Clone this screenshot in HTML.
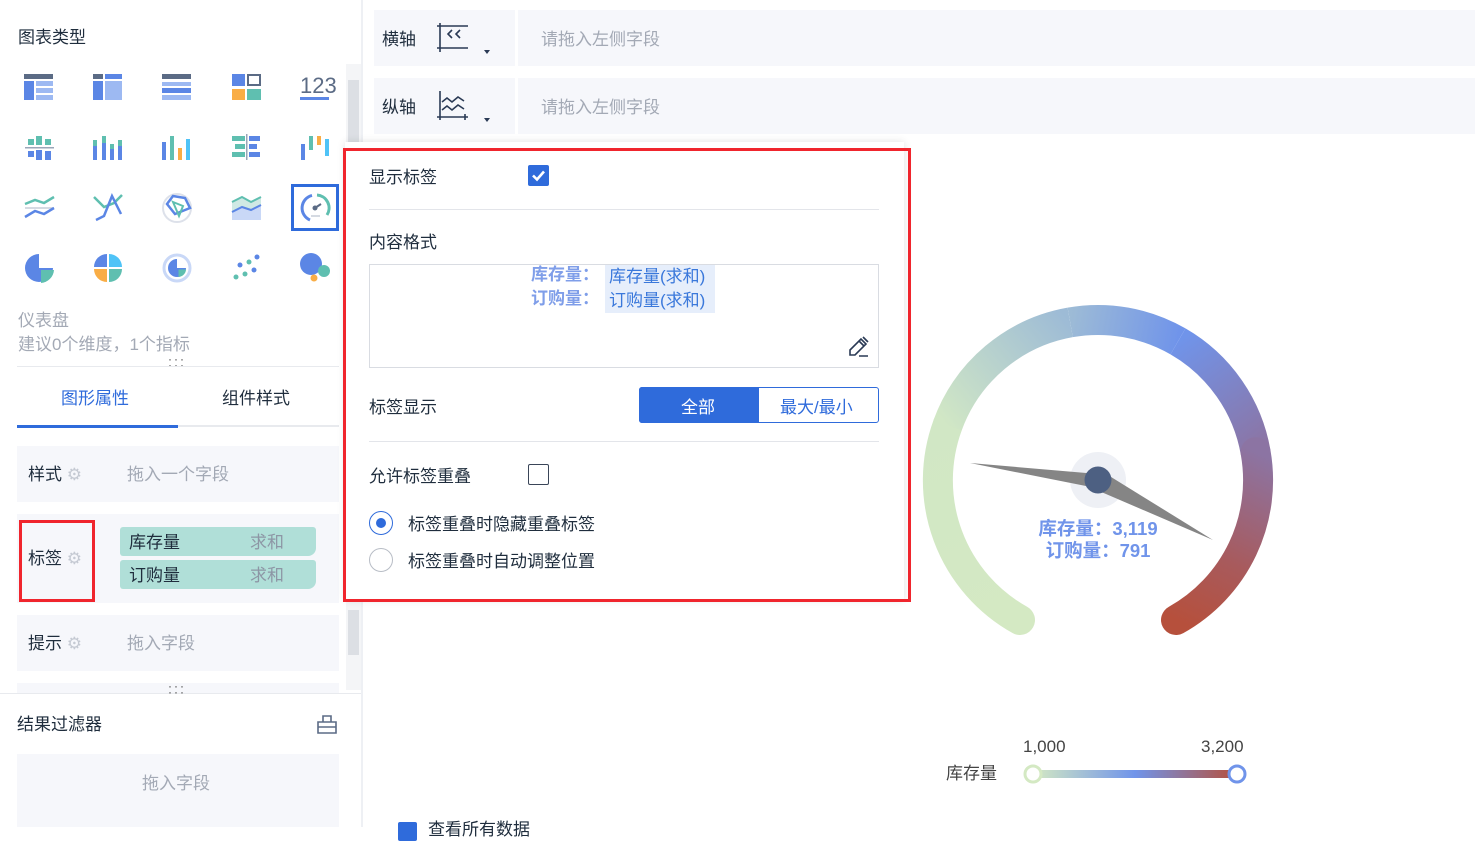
<!DOCTYPE html>
<html><head><meta charset="utf-8"><style>
*{box-sizing:border-box;margin:0;padding:0}
body{width:1475px;height:827px;overflow:hidden;background:#fff;font-family:"Liberation Sans","Noto Sans CJK SC",sans-serif;color:#1f2d3d;position:relative;font-size:17px}
.a{position:absolute}
.t{position:absolute;white-space:nowrap;transform:translateY(-2px)}
.gray{color:#a3a9b5}
.box{position:absolute;background:#f6f7fb}
.gear{color:#c5cad3;font-size:17px}
</style></head><body>

<!-- left panel -->
<div class="t" style="left:18px;top:25px;font-size:17px">图表类型</div>
<svg class="a" style="left:0;top:60px" width="345" height="240">
 <g transform="translate(24,14)"><rect width="29" height="5" fill="#5b6b85"/><rect y="7" width="10" height="19" fill="#5b86e5"/><rect x="12" y="7" width="17" height="5" fill="#9db9f2"/><rect x="12" y="14" width="17" height="5" fill="#9db9f2"/><rect x="12" y="21" width="17" height="5" fill="#9db9f2"/></g>
 <g transform="translate(93,14)"><rect width="10" height="5" fill="#5b6b85"/><rect x="12" width="17" height="5" fill="#5b86e5"/><rect y="7" width="10" height="19" fill="#5b86e5"/><rect x="12" y="7" width="17" height="19" fill="#9db9f2"/></g>
 <g transform="translate(162,14)"><rect width="29" height="5" fill="#5b6b85"/><rect y="8" width="29" height="4" fill="#9db9f2"/><rect y="14" width="29" height="5" fill="#5b86e5"/><rect y="21" width="29" height="5" fill="#9db9f2"/></g>
 <g transform="translate(232,14)"><rect width="13" height="12" fill="#5b86e5"/><rect x="16" y="1" width="12" height="10" fill="none" stroke="#5b6b85" stroke-width="2"/><rect y="15" width="13" height="11" fill="#f9ad45"/><rect x="15" y="15" width="14" height="11" fill="#5fbfb0"/></g>
 <text x="300" y="33" font-size="22" fill="#5b6b85" font-family="Liberation Sans">123</text><rect x="300" y="37" width="29" height="3" fill="#5b86e5"/>
 <g transform="translate(25,74)"><rect x="3" y="5" width="6" height="6" fill="#5fbfb0"/><rect x="11" y="2" width="6" height="9" fill="#5fbfb0"/><rect x="20" y="5" width="6" height="6" fill="#5fbfb0"/><rect y="13" width="29" height="1.5" fill="#9aa6b8"/><rect x="3" y="17" width="6" height="6" fill="#5b86e5"/><rect x="11" y="16" width="6" height="10" fill="#5b86e5"/><rect x="20" y="17" width="6" height="9" fill="#5b86e5"/></g>
 <g transform="translate(93,74)"><rect y="6" width="4" height="20" fill="#5b86e5"/><rect y="6" width="4" height="6" fill="#5fbfb0"/><rect x="9" y="2" width="4" height="24" fill="#5b86e5"/><rect x="9" y="2" width="4" height="7" fill="#5fbfb0"/><rect x="17" y="10" width="4" height="16" fill="#5b86e5"/><rect x="17" y="10" width="4" height="5" fill="#5fbfb0"/><rect x="25" y="6" width="4" height="20" fill="#5b86e5"/><rect x="25" y="6" width="4" height="6" fill="#5fbfb0"/></g>
 <g transform="translate(162,74)"><rect y="8" width="4" height="18" fill="#5b86e5"/><rect x="8" y="2" width="4" height="24" fill="#5fbfb0"/><rect x="16" y="14" width="4" height="12" fill="#f9ad45"/><rect x="24" y="5" width="4" height="21" fill="#4fc3f7"/></g>
 <g transform="translate(232,74)"><rect y="2" width="13" height="5" fill="#5fbfb0"/><rect x="14" y="0" width="1.5" height="26" fill="#9aa6b8"/><rect x="17" y="2" width="11" height="5" fill="#5b86e5"/><rect x="3" y="10" width="10" height="5" fill="#5fbfb0"/><rect x="17" y="10" width="8" height="5" fill="#5b86e5"/><rect y="18" width="13" height="5" fill="#5fbfb0"/><rect x="17" y="18" width="11" height="5" fill="#5b86e5"/></g>
 <g transform="translate(301,74)"><rect y="10" width="4" height="16" fill="#5b86e5"/><rect x="8" y="2" width="4" height="14" fill="#5fbfb0"/><rect x="16" y="2" width="4" height="9" fill="#f9ad45"/><rect x="24" y="5" width="4" height="17" fill="#4fc3f7"/></g>
 <g transform="translate(25,134)" fill="none" stroke-width="2.5"><polyline points="0,10 10,6 19,9 29,3" stroke="#5fbfb0"/><line x1="0" y1="14" x2="29" y2="14" stroke="#c7cdd8" stroke-width="1.5"/><polyline points="0,23 10,17 19,20 29,14" stroke="#5b86e5"/></g>
 <g transform="translate(94,134)" fill="none" stroke-width="2.5"><polyline points="0,3 10,13 20,9 28,1" stroke="#5fbfb0"/><polyline points="2,26 10,22 18,2 27,20" stroke="#5b86e5"/></g>
 <g transform="translate(161,132)" fill="none"><circle cx="16" cy="16" r="14" stroke="#dde1ea" stroke-width="2"/><polygon points="6,12 12,4 24,6 29,16 14,22" stroke="#5b86e5" stroke-width="2.5"/><polygon points="12,10 22,14 18,24" stroke="#5fbfb0" stroke-width="2"/></g>
 <g transform="translate(232,134)"><polygon points="0,8 10,3 19,8 29,3 29,26 0,26" fill="#cfe9e4"/><polyline points="0,8 10,3 19,8 29,3" fill="none" stroke="#5fbfb0" stroke-width="2"/><polygon points="0,18 10,13 19,16 29,11 29,26 0,26" fill="#c9d8f7"/><polyline points="0,18 10,13 19,16 29,11" fill="none" stroke="#5b86e5" stroke-width="2"/></g>
 <rect x="292.5" y="125.5" width="45" height="44" fill="none" stroke="#2f6bdb" stroke-width="3"/>
 <g transform="translate(315,148)" fill="none" stroke-width="3"><path d="M -5 12 A 13 13 0 0 1 -3 -12.6" stroke="#5b86e5"/><path d="M 2 -13 A 13 13 0 0 1 12 7" stroke="#5fbfb0"/><circle r="2.5" fill="#5b6b85" stroke="none"/><line x1="0" y1="0" x2="6" y2="-4" stroke="#5b6b85" stroke-width="2"/><line x1="-4" y1="8" x2="5" y2="8" stroke="#c7cdd8" stroke-width="1.5"/></g>
 <g transform="translate(39,208)"><path d="M0 0 L0 -14 A14 14 0 1 0 14 0 Z" fill="#5b86e5"/><path d="M2 2 L15 2 A14 14 0 0 1 2 15 Z" fill="#5fbfb0"/></g>
 <g transform="translate(108,208)"><path d="M-1 -1 L-1 -14 A13 13 0 0 0 -14 -1 Z" fill="#5b86e5"/><path d="M1 -1 L1 -14 A13 13 0 0 1 14 -1 Z" fill="#4fc3f7"/><path d="M-1 1 L-14 1 A13 13 0 0 0 -1 14 Z" fill="#f9ad45"/><path d="M1 1 L14 1 A13 13 0 0 1 1 14 Z" fill="#5fbfb0"/></g>
 <g transform="translate(177,208)"><circle r="13" fill="none" stroke="#c9d8f7" stroke-width="3"/><path d="M0 0 L0 -9 A9 9 0 1 0 9 0 Z" fill="#5b86e5"/><path d="M1.5 1.5 L9 1.5 A8 8 0 0 1 1.5 9 Z" fill="#5fbfb0"/></g>
 <g transform="translate(232,195)"><circle cx="25" cy="2" r="2.5" fill="#5b86e5"/><circle cx="17" cy="7" r="2.5" fill="#5fbfb0"/><circle cx="8" cy="10" r="2.5" fill="#5b86e5"/><circle cx="22" cy="15" r="2.5" fill="#5b86e5"/><circle cx="13" cy="19" r="2.5" fill="#5fbfb0"/><circle cx="4" cy="22" r="2.5" fill="#5fbfb0"/></g>
 <g transform="translate(300,192)"><circle cx="11" cy="12" r="11" fill="#5b86e5"/><circle cx="24" cy="19" r="6" fill="#5fbfb0"/><circle cx="14" cy="26" r="3.5" fill="#f9ad45"/></g>
</svg>
<div class="a" style="left:346px;top:64px;width:15px;height:626px;background:#f4f5f7"></div>
<div class="a" style="left:348px;top:80px;width:11px;height:64px;background:#dcdfe4"></div>
<div class="a" style="left:348px;top:610px;width:11px;height:45px;background:#dcdfe4"></div>
<div class="a" style="left:361px;top:0;width:2px;height:827px;background:#eef0f4"></div>

<div class="t gray" style="left:18px;top:308px;font-size:17px">仪表盘</div>
<div class="t gray" style="left:18px;top:332px;font-size:17px">建议0个维度，1个指标</div>
<div class="t" style="left:168px;top:358px;font-size:12px;letter-spacing:2px;line-height:6px;color:#444">···<br>···</div>
<div class="a" style="left:17px;top:366px;width:322px;height:1px;background:#e8eaee"></div>
<div class="t" style="left:61px;top:386px;color:#2f6bdb">图形属性</div>
<div class="t" style="left:222px;top:386px">组件样式</div>
<div class="a" style="left:17px;top:425px;width:322px;height:2px;background:#e8eaee"></div>
<div class="a" style="left:17px;top:425px;width:161px;height:3px;background:#2f6bdb"></div>

<div class="box" style="left:17px;top:446px;width:322px;height:56px"></div>
<div class="t" style="left:28px;top:462px">样式 <span class="gear">⚙</span></div>
<div class="t gray" style="left:127px;top:462px">拖入一个字段</div>
<div class="box" style="left:17px;top:514px;width:322px;height:89px"></div>
<div class="t" style="left:28px;top:546px">标签 <span class="gear">⚙</span></div>
<div class="a" style="left:19px;top:520px;width:76px;height:82px;border:3px solid #f0252d"></div>
<div class="a" style="left:120px;top:527px;width:196px;height:29px;background:#b0dfd8;border-radius:3px 3px 8px 3px"></div>
<div class="t" style="left:129px;top:530px">库存量</div><div class="t" style="left:250px;top:530px;color:#8d96a5">求和</div>
<div class="a" style="left:120px;top:560px;width:196px;height:29px;background:#b0dfd8;border-radius:3px 3px 8px 3px"></div>
<div class="t" style="left:129px;top:563px">订购量</div><div class="t" style="left:250px;top:563px;color:#8d96a5">求和</div>
<div class="box" style="left:17px;top:615px;width:322px;height:56px"></div>
<div class="t" style="left:28px;top:631px">提示 <span class="gear">⚙</span></div>
<div class="t gray" style="left:127px;top:631px">拖入字段</div>
<div class="box" style="left:17px;top:683px;width:322px;height:10px"></div>
<div class="a" style="left:0;top:693px;width:361px;height:1px;background:#e8eaee"></div>
<div class="t" style="left:168px;top:685px;font-size:12px;letter-spacing:2px;line-height:6px;color:#444">···<br>···</div>
<div class="t" style="left:17px;top:712px">结果过滤器</div>
<svg class="a" style="left:317px;top:714px" width="20" height="20"><path d="M1 8 H19 V19 H1 Z M6 8 V2 H14 V8 M1 13 H19" fill="none" stroke="#5b6b85" stroke-width="1.6"/></svg>
<div class="box" style="left:17px;top:754px;width:322px;height:73px"></div>
<div class="t gray" style="left:142px;top:771px">拖入字段</div>

<!-- axis rows -->
<div class="box" style="left:374px;top:10px;width:1101px;height:56px"></div>
<div class="a" style="left:515px;top:10px;width:3px;height:56px;background:#fff"></div>
<div class="t" style="left:382px;top:27px">横轴</div>
<svg class="a" style="left:436px;top:22px" width="60" height="38"><path d="M4 1 V30 M1 4 H32 M1 26 H32 M16 8 L12 12 L16 16 M24 8 L20 12 L24 16" fill="none" stroke="#2a3a55" stroke-width="1.6"/><path d="M48 28 L54 28 L51 32 Z" fill="#2a3a55"/></svg>
<div class="t gray" style="left:541px;top:27px">请拖入左侧字段</div>
<div class="box" style="left:374px;top:78px;width:1101px;height:56px"></div>
<div class="a" style="left:515px;top:78px;width:3px;height:56px;background:#fff"></div>
<div class="t" style="left:382px;top:95px">纵轴</div>
<svg class="a" style="left:436px;top:90px" width="60" height="38"><path d="M4 1 V30 M1 27 H32 M29 24 V30 M6 12 L11 8 L16 12 L22 7 L28 11 M6 20 L11 16 L16 20 L22 15 L28 19" fill="none" stroke="#2a3a55" stroke-width="1.6"/><path d="M48 28 L54 28 L51 32 Z" fill="#2a3a55"/></svg>
<div class="t gray" style="left:541px;top:95px">请拖入左侧字段</div>

<!-- popup -->
<div class="a" style="left:345px;top:142px;width:559px;height:458px;background:#fff;box-shadow:0 0 8px rgba(0,0,0,.12)"></div>
<div class="a" style="left:343px;top:148px;width:568px;height:454px;border:3px solid #f0252d"></div>
<div class="t" style="left:369px;top:165px">显示标签</div>
<div class="a" style="left:528px;top:165px;width:21px;height:21px;background:#2f6bdb;border-radius:2px"></div>
<svg class="a" style="left:528px;top:165px" width="21" height="21"><path d="M5 10.5 L9 14.5 L16 6.5" fill="none" stroke="#fff" stroke-width="2.6"/></svg>
<div class="a" style="left:369px;top:209px;width:510px;height:1px;background:#e3e5ea"></div>
<div class="t" style="left:369px;top:230px">内容格式</div>
<div class="a" style="left:369px;top:264px;width:510px;height:104px;border:1px solid #d9dce2"></div>
<div class="t" style="left:531px;top:265px;font-weight:bold;color:#7f9ee9;line-height:24px">库存量：<br>订购量：</div>
<div class="a" style="left:605px;top:265px;width:110px;height:48px;background:#e6eefb"></div>
<div class="t" style="left:609px;top:267px;color:#3a78db;line-height:24px">库存量(求和)<br>订购量(求和)</div>
<svg class="a" style="left:847px;top:335px" width="24" height="24"><path d="M3 20 L3 15 L14 4 L19 9 L8 20 Z M12 6 L17 11 M16 2 L21 7 M12 21 H21" fill="none" stroke="#2a3a55" stroke-width="1.6"/></svg>
<div class="t" style="left:369px;top:395px">标签显示</div>
<div class="a" style="left:639px;top:387px;width:240px;height:36px;border:1px solid #2f6bdb;border-radius:3px"></div>
<div class="a" style="left:639px;top:387px;width:120px;height:36px;background:#2f6bdb;border-radius:3px 0 0 3px"></div>
<div class="t" style="left:681px;top:395px;color:#fff">全部</div>
<div class="t" style="left:780px;top:395px;color:#2f6bdb">最大/最小</div>
<div class="a" style="left:369px;top:441px;width:510px;height:1px;background:#e3e5ea"></div>
<div class="t" style="left:369px;top:464px">允许标签重叠</div>
<div class="a" style="left:528px;top:464px;width:21px;height:21px;border:1.5px solid #3a4558;border-radius:2px"></div>
<div class="a" style="left:369px;top:511px;width:24px;height:24px;border:1.5px solid #2f6bdb;border-radius:50%"></div>
<div class="a" style="left:376px;top:518px;width:10px;height:10px;background:#2f6bdb;border-radius:50%"></div>
<div class="t" style="left:408px;top:512px">标签重叠时隐藏重叠标签</div>
<div class="a" style="left:369px;top:548px;width:24px;height:24px;border:1.5px solid #b8bdc6;border-radius:50%"></div>
<div class="t" style="left:408px;top:549px">标签重叠时自动调整位置</div>

<!-- gauge -->
<svg class="a" style="left:0;top:0" width="1475" height="827">
<defs>
<linearGradient id="g1" gradientUnits="userSpaceOnUse" x1="1020" y1="620" x2="947" y2="425"><stop offset="0" stop-color="#d4e9c3"/><stop offset="1" stop-color="#d1e7c5"/></linearGradient>
<linearGradient id="g2" gradientUnits="userSpaceOnUse" x1="947" y1="425" x2="1070" y2="322"><stop offset="0" stop-color="#d1e7c5"/><stop offset="1" stop-color="#9dbbd6"/></linearGradient>
<linearGradient id="g3" gradientUnits="userSpaceOnUse" x1="1070" y1="322" x2="1178" y2="341"><stop offset="0" stop-color="#9dbbd6"/><stop offset="1" stop-color="#7094ea"/></linearGradient>
<linearGradient id="g4" gradientUnits="userSpaceOnUse" x1="1178" y1="341" x2="1256" y2="452"><stop offset="0" stop-color="#7094ea"/><stop offset="1" stop-color="#8c74a3"/></linearGradient>
<linearGradient id="g5" gradientUnits="userSpaceOnUse" x1="1256" y1="452" x2="1176" y2="620"><stop offset="0" stop-color="#8c74a3"/><stop offset="0.6" stop-color="#a85a5c"/><stop offset="1" stop-color="#b6503c"/></linearGradient>
<linearGradient id="sl" x1="0" x2="1"><stop offset="0" stop-color="#d4e9c3"/><stop offset="0.5" stop-color="#7094ea"/><stop offset="1" stop-color="#b6503c"/></linearGradient>
</defs>
<g fill="none" stroke-width="30">
<path d="M1020 620 A160 160 0 0 1 947.6 425.3" stroke="url(#g1)" stroke-linecap="round"/>
<path d="M947.6 425.3 A160 160 0 0 1 1070.2 322.4" stroke="url(#g2)"/>
<path d="M1070.2 322.4 A160 160 0 0 1 1178 341.4" stroke="url(#g3)"/>
<path d="M1178 341.4 A160 160 0 0 1 1255.6 452.2" stroke="url(#g4)"/>
<path d="M1255.6 452.2 A160 160 0 0 1 1176 620" stroke="url(#g5)" stroke-linecap="round"/>
</g>
<circle cx="1098" cy="480" r="28" fill="#eef0f5"/>
<polygon points="970,463 1098,474 1096,488" fill="#858585"/>
<polygon points="1213,540 1092,488 1103,472" fill="#858585"/>
<circle cx="1098" cy="480" r="13.5" fill="#4d6082"/>
<text x="1098" y="535" text-anchor="middle" font-size="18.5" font-weight="bold" fill="#7094ea" font-family="Liberation Sans,Noto Sans CJK SC,sans-serif">库存量：3,119</text>
<text x="1098" y="557" text-anchor="middle" font-size="18.5" font-weight="bold" fill="#7094ea" font-family="Liberation Sans,Noto Sans CJK SC,sans-serif">订购量：791</text>
<rect x="1033" y="770" width="204" height="8" fill="url(#sl)"/>
<circle cx="1033" cy="774" r="8" fill="#fff" stroke="#d4e9c3" stroke-width="3"/>
<circle cx="1237" cy="774" r="8" fill="#fff" stroke="#7094ea" stroke-width="3"/>
</svg>
<div class="t" style="left:1023px;top:739px;color:#444">1,000</div>
<div class="t" style="left:1201px;top:739px;color:#444">3,200</div>
<div class="t" style="left:946px;top:761px;color:#444">库存量</div>

<div class="a" style="left:398px;top:822px;width:19px;height:19px;background:#2f6bdb;border-radius:2px"></div>
<div class="t" style="left:428px;top:817px">查看所有数据</div>
</body></html>
